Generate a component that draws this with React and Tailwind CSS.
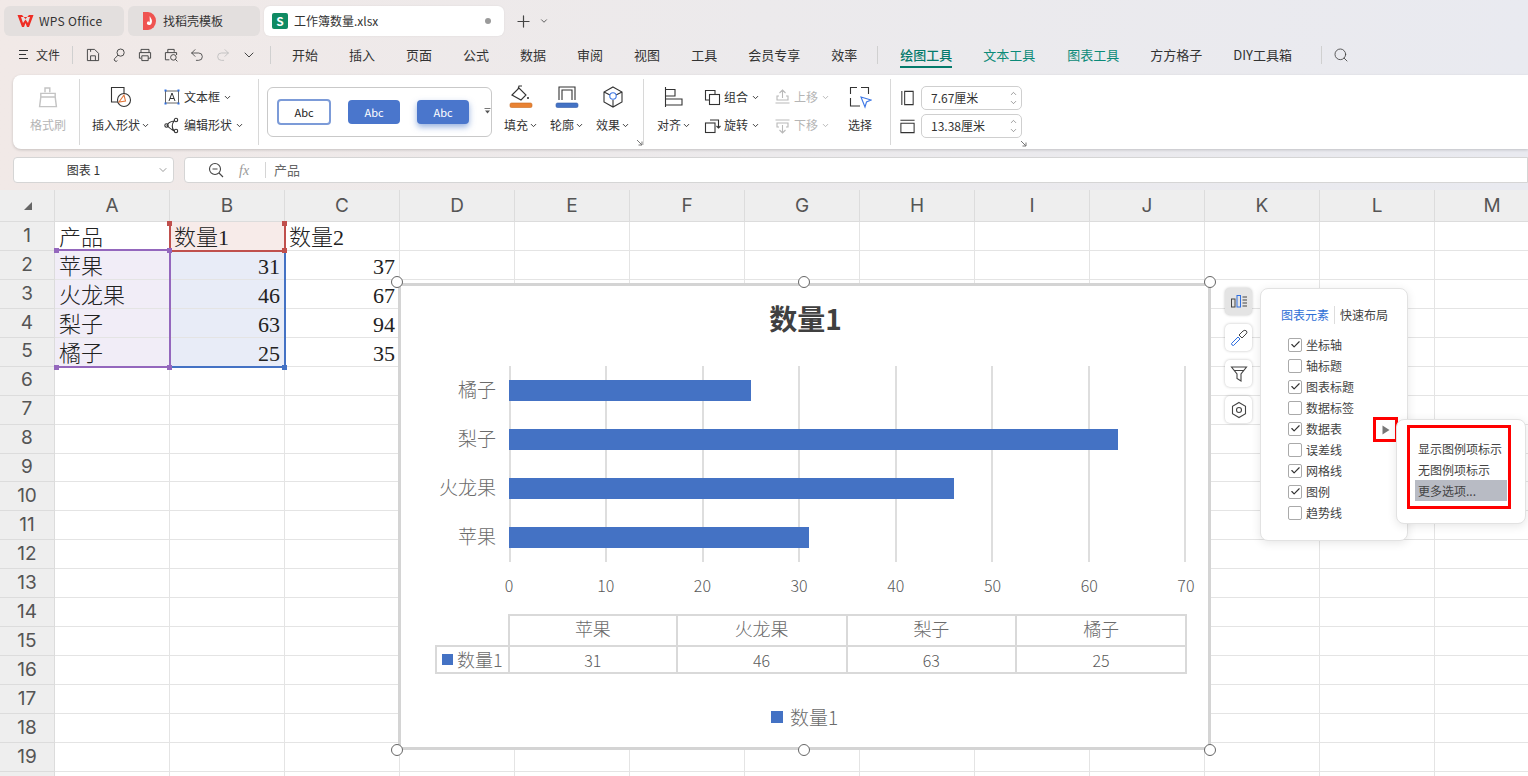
import { Plus, ChevronDown, ChevronUp, Check, Undo2, Redo2, Search } from 'lucide-react';

const ui = { fontFamily: '"Noto Sans CJK SC", "Noto Sans", sans-serif' };
const serif = { fontFamily: '"Liberation Serif", "Noto Sans CJK SC", serif' };

const columns = ['A', 'B', 'C', 'D', 'E', 'F', 'G', 'H', 'I', 'J', 'K', 'L', 'M'];
const rows = Array.from({ length: 20 }, (_, i) => i + 1);
const cells = {
  A1: '产品', B1: '数量1', C1: '数量2',
  A2: '苹果', B2: '31', C2: '37',
  A3: '火龙果', B3: '46', C3: '67',
  A4: '梨子', B4: '63', C4: '94',
  A5: '橘子', B5: '25', C5: '35',
};
const bars = [
  { name: '橘子', value: 25 },
  { name: '梨子', value: 63 },
  { name: '火龙果', value: 46 },
  { name: '苹果', value: 31 },
];
const tableData = [
  { name: '苹果', value: 31 },
  { name: '火龙果', value: 46 },
  { name: '梨子', value: 63 },
  { name: '橘子', value: 25 },
];
const menus = ['开始', '插入', '页面', '公式', '数据', '审阅', '视图', '工具', '会员专享', '效率'];
const elements = [
  ['坐标轴', true], ['轴标题', false], ['图表标题', true], ['数据标签', false], ['数据表', true],
  ['误差线', false], ['网格线', true], ['图例', true], ['趋势线', false],
];

function Icon({ size = 20, className = '', children }) {
  return (
    <svg width={size} height={size} viewBox="0 0 20 20" fill="none" stroke="currentColor" strokeWidth="1.2" className={`shrink-0 ${className}`}>
      {children}
    </svg>
  );
}

function Tiny({ className = '' }) {
  return <ChevronDown size={9} strokeWidth={2.5} className={`shrink-0 ${className}`} />;
}

function RibbonBtn({ icon, label, chevron, muted, className = '' }) {
  return (
    <div className={`flex flex-col items-center shrink-0 self-start ${className}`}>
      <div className="h-[30px] flex items-center justify-center mt-[7px]">{icon}</div>
      <div className={`mt-[4px] h-[18px] flex items-center text-[12px] ${muted ? 'text-[#b5b5b5]' : 'text-[#333]'}`}>
        {label}
        {chevron && <Tiny className="ml-[1px]" />}
      </div>
    </div>
  );
}

function SmallBtn({ icon, label, muted }) {
  return (
    <div className={`flex items-center h-[24px] text-[12px] ${muted ? 'text-[#b5b5b5]' : 'text-[#333]'}`}>
      <span className="w-[20px] flex justify-center shrink-0">{icon}</span>
      <span className="ml-[2px]">{label}</span>
      <Tiny className="ml-[3px]" />
    </div>
  );
}

function Sep() {
  return <div className="w-px h-[66px] bg-[#d8d8d8] shrink-0" />;
}

function Tabs() {
  return (
    <div className="h-[36px] pt-[6px] pl-[4px] flex items-stretch gap-[4px] text-[12px] text-[#333]">
      <div className="w-[120px] rounded-[6px] bg-[#e3dfde] flex items-center pl-[13px]">
        <svg width="17" height="14" viewBox="0 0 17 14" className="shrink-0">
          <path d="M0.5 1 H5 L8.5 5 L12 1 H16.5 L12 13 H10 L8.5 9 L7 13 H5 Z M4 3 L6 9 L8.5 5.5 L11 9 L13 3" fill="#ee2d24" fillRule="evenodd" />
        </svg>
        <span className="ml-[5px] tracking-[0.3px]">WPS Office</span>
      </div>
      <div className="w-[132px] rounded-[6px] bg-[#e3dfde] flex items-center pl-[14px]">
        <svg width="15" height="18" viewBox="0 0 15 18" className="shrink-0">
          <path d="M1 0 H6 A8 9 0 0 1 6 18 H1 Z" fill="#ef5350" />
          <path d="M7.8 4 C9 7 11 8 9.5 11.5 C8.5 13.5 6 13.5 5 12 C4.5 10.5 5.5 9.5 6.5 9 C6.5 10 7 10.5 7.5 10 C8.3 8 7.2 6 7.8 4 Z" fill="#fff" />
        </svg>
        <span className="ml-[6px]">找稻壳模板</span>
      </div>
      <div className="w-[240px] rounded-[6px] bg-white flex items-center pl-[8px] pr-[13px] shadow-[0_0_2px_rgba(0,0,0,0.08)]">
        <span className="w-[16px] h-[16px] rounded-[2px] bg-[#0f8a63] text-white text-[12px] font-bold flex items-center justify-center shrink-0">S</span>
        <span className="ml-[6px] flex-1">工作簿数量.xlsx</span>
        <span className="w-[6px] h-[6px] rounded-full bg-[#9a9a9a]" />
      </div>
      <div className="ml-[6px] flex items-center text-[#444]">
        <Plus size={19} strokeWidth={1.5} />
        <ChevronDown size={10} strokeWidth={2} className="ml-[6px]" />
      </div>
    </div>
  );
}

function MenuBar() {
  return (
    <div className="h-[39px] pb-[2px] flex items-center text-[13px] text-[#333]">
      <div className="ml-[19px] w-[9px] flex flex-col gap-[3px] shrink-0">
        <span className="h-px bg-[#333]" />
        <span className="h-px bg-[#333] w-[7px]" />
        <span className="h-px bg-[#333]" />
      </div>
      <span className="ml-[8px] text-[12px]">文件</span>
      <div className="ml-[12px] w-px h-[18px] bg-[#d0d0d0]" />
      <div className="ml-[12px] flex items-center gap-[10px] text-[#444] w-[172px]">
        <Icon size={16}>
          <path d="M3 3 H12 L17 8 V17 H3 Z M7 17 V11 H13 V17 M7 3 V6" />
        </Icon>
        <Icon size={16}>
          <circle cx="12" cy="7" r="4.5" />
          <path d="M9 10 L4.5 14.5 A1.8 1.8 0 0 0 8 17" />
        </Icon>
        <Icon size={16}>
          <path d="M5 7 V3 H15 V7 M3 14 V7 H17 V14 H14 M5 14 H3 M6 11 H14 V17 H6 Z" />
        </Icon>
        <Icon size={16}>
          <path d="M6 7 V3 H14 V6 M8 16 H3 V7 H17 V10" />
          <circle cx="13" cy="13" r="3.5" />
          <path d="M15.5 15.5 L18 18" />
        </Icon>
        <Undo2 size={16} strokeWidth={1.3} className="shrink-0" />
        <Redo2 size={16} strokeWidth={1.3} className="shrink-0 text-[#bdbdbd]" />
        <ChevronDown size={16} strokeWidth={1.5} className="shrink-0" />
      </div>
      <div className="w-px h-[18px] bg-[#d0d0d0] ml-[13px]" />
      <div className="ml-[21px] flex gap-[31px]">
        {menus.map((m) => <span key={m}>{m}</span>)}
      </div>
      <div className="ml-[20px] w-px h-[18px] bg-[#d0d0d0]" />
      <div className="ml-[22px] relative text-[#047a6b] font-medium">
        绘图工具
        <span className="absolute left-0 right-0 -bottom-[4px] h-[2px] bg-[#047a6b]" />
      </div>
      <span className="ml-[31px] text-[#0b8a78]">文本工具</span>
      <span className="ml-[32px] text-[#0b8a78]">图表工具</span>
      <span className="ml-[31px]">方方格子</span>
      <span className="ml-[31px]">DIY工具箱</span>
      <div className="ml-[29px] w-px h-[18px] bg-[#d0d0d0]" />
      <Search size={16} strokeWidth={1.3} className="ml-[11px] text-[#444]" />
    </div>
  );
}

function StylePreset({ variant, children }) {
  const styles = {
    outline: 'w-[54px] h-[26px] border-2 border-[#7c9bd8] bg-white text-[#222]',
    fill: 'w-[52px] h-[24px] bg-[#4a76cc] text-white',
    glow: 'w-[52px] h-[24px] bg-[#4a76cc] text-white shadow-[0_3px_6px_rgba(68,114,196,0.55)]',
  };
  return (
    <div className={`rounded-[4px] flex items-center justify-center text-[11px] shrink-0 ${styles[variant]}`}>{children}</div>
  );
}

function Ribbon() {
  return (
    <div className="ml-[13px] h-[74px] rounded-l-[8px] bg-white shadow-[0_1px_3px_rgba(0,0,0,0.18)] flex items-center relative">
      <RibbonBtn
        className="w-[66px] pl-[4px]"
        muted
        label="格式刷"
        icon={
          <Icon size={24} className="text-[#c4c4c4]">
            <path d="M7.5 6 V2.5 H11.5 V6 M4 7 H16 V10 L17 18 H3 L4 10 Z M4 10 H16" />
          </Icon>
        }
      />
      <Sep />
      <RibbonBtn
        className="w-[84px] ml-[-1px]"
        chevron
        label="插入形状"
        icon={
          <svg width="24" height="24" viewBox="0 0 24 24" fill="none" stroke="#333" strokeWidth="1.1">
            <path d="M9 17 H2.5 V2.5 H15 V9" />
            <circle cx="15" cy="15" r="6.5" />
            <path d="M10 17 L15 10 L16.5 16 Z" stroke="#e1763a" fill="#fff" />
          </svg>
        }
      />
      <div className="flex flex-col gap-[4px] w-[96px] ml-[-1px] shrink-0 self-start mt-[10px]">
        <SmallBtn
          label="文本框"
          icon={
            <svg width="16" height="16" viewBox="0 0 16 16" fill="none" stroke="#333" strokeWidth="1">
              <path d="M1.5 2 V14 M14.5 2 V14 M2 2 H14 M2 14 H14" stroke="#666" />
              <path d="M5 12 L8 4 L11 12 M6 9.5 H10" />
              <rect x="0.5" y="0.5" width="2" height="2" fill="#2f6fe0" stroke="none" />
              <rect x="13.5" y="0.5" width="2" height="2" fill="#2f6fe0" stroke="none" />
              <rect x="0.5" y="13.5" width="2" height="2" fill="#2f6fe0" stroke="none" />
              <rect x="13.5" y="13.5" width="2" height="2" fill="#2f6fe0" stroke="none" />
            </svg>
          }
        />
        <SmallBtn
          label="编辑形状"
          icon={
            <svg width="17" height="17" viewBox="0 0 17 17" fill="none" stroke="#333" strokeWidth="1.1">
              <path d="M10 4 Q4 5 3 8.5 Q5 11 10 14 M10 4 Q6.5 9 10 14" />
              <circle cx="12" cy="3" r="1.7" />
              <circle cx="2.5" cy="8.5" r="1.7" />
              <circle cx="12" cy="14" r="1.7" />
            </svg>
          }
        />
      </div>
      <Sep />
      <div className="ml-[8px] w-[225px] h-[50px] rounded-[6px] border border-[#c9c9c9] flex items-center pl-[9px] gap-[17px] relative shrink-0">
        <StylePreset variant="outline">Abc</StylePreset>
        <StylePreset variant="fill">Abc</StylePreset>
        <StylePreset variant="glow">Abc</StylePreset>
        <svg width="7" height="7" viewBox="0 0 7 7" className="ml-[-2px] mt-[-2px]">
          <path d="M0.5 0.5 H6.5" stroke="#555" strokeWidth="0.8" />
          <path d="M1 2.5 H6 L3.5 5.5 Z" fill="#555" />
        </svg>
      </div>
      <RibbonBtn
        className="w-[46px] ml-[6px]"
        chevron
        label="填充"
        icon={
          <svg width="26" height="26" viewBox="0 0 26 26" fill="none" stroke="#333" strokeWidth="1.1">
            <path d="M4 11 L11 4 L18 11 L13 16 Z M10 5 L11 2 L14 2" />
            <path d="M20 13 V15" strokeWidth="1.6" />
            <rect x="2" y="19" width="22" height="4.5" rx="1.5" fill="#e98232" stroke="#c66a20" strokeWidth="0.6" />
          </svg>
        }
      />
      <RibbonBtn
        className="w-[46px]"
        chevron
        label="轮廓"
        icon={
          <svg width="26" height="26" viewBox="0 0 26 26" fill="none" stroke="#333" strokeWidth="1.1">
            <path d="M5 16 V3 H21 V16 M8 16 V6 H18 V16" />
            <rect x="2" y="19" width="22" height="4.5" rx="1.5" fill="#4472c4" stroke="#305ba8" strokeWidth="0.6" />
          </svg>
        }
      />
      <RibbonBtn
        className="w-[46px]"
        chevron
        label="效果"
        icon={
          <svg width="24" height="24" viewBox="0 0 24 24" fill="none" stroke="#333" strokeWidth="1.1">
            <path d="M12 2 L21 7 V17 L12 22 L3 17 V7 Z M3 7 L9 10 M21 7 L15 10 M12 15 V22" />
            <circle cx="12" cy="11" r="3.2" stroke="#3e78e6" />
          </svg>
        }
      />
      <svg width="7" height="7" viewBox="0 0 7 7" className="self-end mb-[3px] shrink-0" stroke="#777" fill="none">
        <path d="M1 1 L6 6 M6 2.5 V6 H2.5" />
      </svg>
      <Sep />
      <RibbonBtn
        className="w-[48px] ml-[6px]"
        chevron
        label="对齐"
        icon={
          <svg width="20" height="22" viewBox="0 0 20 22" fill="none" stroke="#333" strokeWidth="1.1">
            <path d="M1.5 1 V21 M1.5 3.5 H11 V10 H1.5 M1.5 13 H18 V19 H1.5" />
          </svg>
        }
      />
      <div className="flex flex-col gap-[4px] w-[70px] shrink-0 ml-[4px] self-start mt-[10px]">
        <SmallBtn
          label="组合"
          icon={
            <svg width="17" height="17" viewBox="0 0 17 17" fill="none" stroke="#333" strokeWidth="1.1">
              <path d="M5 11 H1.5 V1.5 H11 V5" />
              <rect x="5.5" y="5.5" width="10" height="10" />
            </svg>
          }
        />
        <SmallBtn
          label="旋转"
          icon={
            <svg width="17" height="17" viewBox="0 0 17 17" fill="none" stroke="#333" strokeWidth="1.1">
              <rect x="1.5" y="6" width="9.5" height="9.5" />
              <path d="M6 3 H14.5 V11 M12.5 9 L14.5 11 L16.5 9" />
            </svg>
          }
        />
      </div>
      <div className="flex flex-col gap-[4px] w-[70px] shrink-0 self-start mt-[10px]">
        <SmallBtn
          muted
          label="上移"
          icon={
            <svg width="17" height="17" viewBox="0 0 17 17" fill="none" stroke="#b9b9b9" strokeWidth="1.1">
              <path d="M8.5 1 V9 M5.5 4 L8.5 1 L11.5 4 M5 7 H3 V11 H14 V7 H12 M1.5 14 H15.5" />
            </svg>
          }
        />
        <SmallBtn
          muted
          label="下移"
          icon={
            <svg width="17" height="17" viewBox="0 0 17 17" fill="none" stroke="#b9b9b9" strokeWidth="1.1">
              <path d="M8.5 16 V8 M5.5 13 L8.5 16 L11.5 13 M5 10 H3 V6 H14 V10 H12 M1.5 3 H15.5" />
            </svg>
          }
        />
      </div>
      <RibbonBtn
        className="w-[36px]"
        label="选择"
        icon={
          <svg width="24" height="24" viewBox="0 0 24 24" fill="none" stroke="#333" strokeWidth="1.1">
            <path d="M9 2.5 H2.5 V9 M13 2.5 H20.5 V9 M2.5 13 V21 H12" />
            <path d="M13 12 L23 15 L18.5 17 L17 22 Z" stroke="#3e78e6" />
          </svg>
        }
      />
      <div className="ml-[12px]"><Sep /></div>
      <div className="ml-[8px] flex flex-col gap-[4px] shrink-0 relative">
        {[
          ['7.67厘米', 'M3 1.5 V16.5 M6 2 H15 V16 H6 Z'],
          ['13.38厘米', 'M1.5 3 H16.5 M2 6 H16 V16 H2 Z'],
        ].map(([v, d]) => (
          <div key={v} className="flex items-center">
            <svg width="17" height="18" viewBox="0 0 18 18" fill="none" stroke="#333" strokeWidth="1.1"><path d={d} /></svg>
            <div className="ml-[5px] w-[101px] h-[24px] rounded-[5px] border border-[#cfcfcf] flex items-center pl-[9px] pr-[3px] text-[12px] text-[#333]">
              <span className="flex-1">{v}</span>
              <div className="flex flex-col text-[#555]">
                <ChevronUp size={9} strokeWidth={1.5} />
                <ChevronDown size={9} strokeWidth={1.5} />
              </div>
            </div>
          </div>
        ))}
        <svg width="7" height="7" viewBox="0 0 7 7" className="absolute -right-[5px] -bottom-[9px]" stroke="#777" fill="none">
          <path d="M1 1 L6 6 M6 2.5 V6 H2.5" />
        </svg>
      </div>
    </div>
  );
}

function FormulaBar() {
  return (
    <div className="mt-[8px] ml-[13px] h-[26px] flex gap-[10px] text-[12px] text-[#333]">
      <div className="w-[161px] rounded-[4px] bg-white border border-[#d5d5d5] flex items-center">
        <span className="flex-1 text-center pr-[4px]">图表 1</span>
        <ChevronDown size={12} strokeWidth={1.3} className="mr-[4px] text-[#666]" />
      </div>
      <div className="flex-1 rounded-l-[4px] bg-white border border-[#d5d5d5] flex items-center">
        <svg width="16" height="16" viewBox="0 0 16 16" fill="none" stroke="#444" strokeWidth="1.1" className="ml-[23px]">
          <circle cx="7" cy="7" r="5.5" />
          <path d="M11 11 L15 15 M4.5 7 H9.5" />
        </svg>
        <span style={serif} className="ml-[15px] italic text-[#999] text-[14px]">fx</span>
        <div className="ml-[16px] w-px h-[16px] bg-[#d5d5d5]" />
        <span className="ml-[8px] text-[#666] text-[13px]">产品</span>
      </div>
    </div>
  );
}

function cellTint(key) {
  if (key === 'B1') return 'bg-[#f7ebe9]';
  if (key[0] === 'A' && key !== 'A1' && Number(key.slice(1)) <= 5) return 'bg-[#f1edf7]';
  if (key[0] === 'B' && Number(key.slice(1)) <= 5) return 'bg-[#e8ecf7]';
  return 'bg-white';
}

function Sheet() {
  return (
    <div className="grid grid-cols-[55px_repeat(13,115px)] grid-rows-[32px_repeat(20,28.95px)] bg-white text-[#222]">
      <div className="bg-[#eeeeee] border-r border-b border-[#dcdcdc] flex items-center justify-center pl-[2px]">
        <svg width="10" height="10" viewBox="0 0 10 10"><path d="M9 1 V9 H1 Z" fill="#666" /></svg>
      </div>
      {columns.map((c) => (
        <div key={c} style={{ fontFamily: 'Inter, sans-serif' }} className="bg-[#eeeeee] border-r border-b border-[#dcdcdc] flex items-center justify-center pt-[1px] text-[19px] text-[#555]">
          {c}
        </div>
      ))}
      {rows.map((r) => [
        <div key={`h${r}`} style={{ fontFamily: 'Inter, sans-serif' }} className="bg-[#eeeeee] border-r border-b border-[#dcdcdc] flex items-center justify-center text-[19px] text-[#555]">
          {r}
        </div>,
        ...columns.map((c) => {
          const key = `${c}${r}`;
          const value = cells[key];
          const numeric = value && /^\d+$/.test(value);
          return (
            <div
              key={key}
              style={serif}
              className={`border-r border-b border-[#e4e4e4] flex items-end px-[4px] text-[22px] leading-[24px] font-light overflow-hidden whitespace-nowrap ${numeric ? 'justify-end' : ''} ${cellTint(key)}`}
            >
              {value}
            </div>
          );
        }),
      ])}
    </div>
  );
}

function Handle({ className, color }) {
  return <span className={`absolute w-[5px] h-[5px] ${className}`} style={{ background: color }} />;
}

function Knob({ className }) {
  return <span className={`absolute w-[12px] h-[12px] rounded-full bg-white border border-[#666] ${className}`} />;
}

function Chart() {
  return (
    <div className="absolute left-[398px] top-[283px] w-[813px] h-[467px] bg-white border-[3px] border-[#d4d4d4] text-[#6b6b6b] font-light" style={serif}>
      <Knob className="-left-[10px] -top-[10px]" />
      <Knob className="left-[397px] -top-[10px]" />
      <Knob className="-right-[8px] -top-[10px]" />
      <Knob className="-left-[10px] -bottom-[9px]" />
      <Knob className="left-[397px] -bottom-[9px]" />
      <Knob className="-right-[8px] -bottom-[9px]" />

      <div style={ui} className="pt-[12px] h-[80px] text-center text-[28px] leading-[40px] font-bold text-[#404040] pl-[2px]">数量1</div>

      <div className="flex">
        <div className="w-[95px] shrink-0 flex flex-col">
          {bars.map((b) => (
            <div key={b.name} className="h-[49px] pt-[2px] flex items-center justify-end text-[19px] whitespace-nowrap">{b.name}</div>
          ))}
        </div>
        <div className="ml-[13px] w-[677px] relative">
          <div className="absolute inset-0 flex justify-between">
            {[0, 1, 2, 3, 4, 5, 6, 7].map((i) => <span key={i} className="w-[2px] bg-[#dedede]" />)}
          </div>
          {bars.map((b) => (
            <div key={b.name} className="h-[49px] flex items-center relative">
              <div className="h-[21px] bg-[#4472c4]" style={{ width: `${(b.value / 70) * 677}px` }} />
            </div>
          ))}
        </div>
      </div>

      <div className="ml-[108px] w-[677px] flex justify-between mt-[13px] h-[20px] text-[16px] leading-[20px] text-[#595959]" style={ui}>
        {[0, 10, 20, 30, 40, 50, 60, 70].map((n) => (
          <span key={n} className="w-0 flex justify-center">{n}</span>
        ))}
      </div>

      <div className="ml-[34px] mt-[19px] w-[752px] grid grid-cols-[73px_repeat(4,1fr)] grid-rows-[31px_29px] text-[18px]">
        <div />
        {tableData.map((d, i) => (
          <div key={d.name} className={`border-t-2 border-r-2 border-[#d9d9d9] flex items-center justify-center ${i === 0 ? 'border-l-2' : ''}`}>{d.name}</div>
        ))}
        <div className="border-2 border-r-0 border-[#d9d9d9] flex items-center pl-[5px] whitespace-nowrap text-[18px]">
          <span className="w-[11px] h-[11px] bg-[#4472c4] mr-[4px] shrink-0" />
          <span style={ui}>数量1</span>
        </div>
        {tableData.map((d, i) => (
          <div key={d.name} className={`border-t-2 border-b-2 border-r-2 border-[#d9d9d9] flex items-center justify-center text-[#595959] ${i === 0 ? 'border-l-2' : ''}`} style={ui}>
            <span className="text-[16px]">{d.value}</span>
          </div>
        ))}
      </div>

      <div className="mt-[29px] flex items-center justify-center text-[19px]">
        <span className="w-[12px] h-[12px] bg-[#4472c4] mr-[7px]" />
        <span style={ui}>数量1</span>
      </div>
    </div>
  );
}

function SideBtn({ active, children }) {
  return (
    <div className={`w-[27px] h-[27px] rounded-[5px] flex items-center justify-center shadow-[0_0_3px_rgba(0,0,0,0.25)] ${active ? 'bg-[#e4e4e4]' : 'bg-white'}`}>
      {children}
    </div>
  );
}

function ChartTools() {
  return (
    <div style={ui} className="absolute left-[1225px] top-[288px] flex items-start gap-[8px] text-[12px] text-[#444]">
      <div className="flex flex-col gap-[9px]">
        <SideBtn active>
          <svg width="20" height="20" viewBox="0 0 20 20" fill="none" stroke="#444" strokeWidth="1">
            <rect x="2.5" y="7" width="3.5" height="8" />
            <rect x="8" y="3.5" width="3.5" height="11.5" stroke="#2f6fe0" />
            <path d="M13.5 5 H18 M13.5 8 H18 M13.5 11 H18 M13.5 14 H18" />
          </svg>
        </SideBtn>
        <SideBtn>
          <svg width="20" height="20" viewBox="0 0 20 20" fill="none" stroke="#444" strokeWidth="1">
            <path d="M10 7 L14 3 Q16 1.5 17.5 3 Q18.5 5 17 6 L13 10 Z" />
            <path d="M3 17 L2.5 15.5 L9 9 L11 11 L4.5 17.5 Z" stroke="#2f6fe0" />
          </svg>
        </SideBtn>
        <SideBtn>
          <svg width="20" height="20" viewBox="0 0 20 20" fill="none" stroke="#444" strokeWidth="1.1">
            <path d="M2.5 3 H17.5 L12 10 V17 L8 14.5 V10 Z M5.5 6.5 H14.5" />
          </svg>
        </SideBtn>
        <SideBtn>
          <svg width="20" height="20" viewBox="0 0 20 20" fill="none" stroke="#444" strokeWidth="1.1">
            <path d="M10 2.5 L16.5 6.2 V13.8 L10 17.5 L3.5 13.8 V6.2 Z" />
            <circle cx="10" cy="10" r="2.5" />
          </svg>
        </SideBtn>
      </div>

      <div className="w-[148px] h-[253px] rounded-[8px] bg-white border border-[#e2e2e2] shadow-[0_2px_10px_rgba(0,0,0,0.1)] relative pl-[20px] pt-[17px]">
        <div className="flex items-center h-[18px]">
          <span className="text-[#2f6fd6]">图表元素</span>
          <span className="mx-[5px] w-px h-[18px] bg-[#ddd]" />
          <span>快速布局</span>
        </div>
        <div className="mt-[10px] ml-[7px] flex flex-col">
          {elements.map(([name, on]) => (
            <div key={name} className="h-[21px] flex items-center">
              <span className="w-[14px] h-[14px] rounded-[2px] border border-[#aaa] bg-white flex items-center justify-center text-[#333]">
                {on && <Check size={11} strokeWidth={2.5} />}
              </span>
              <span className="ml-[4px]">{name}</span>
            </div>
          ))}
        </div>
        <div className="absolute left-[112px] top-[128px] w-[25px] h-[25px] border-[3px] border-[#ff0000] flex items-center justify-center">
          <svg width="8" height="10" viewBox="0 0 8 10"><path d="M0.5 0.5 L7.5 5 L0.5 9.5 Z" fill="#777" /></svg>
        </div>
      </div>

      <div className="absolute left-[171px] top-[131px] w-[130px] h-[105px] rounded-[8px] bg-white border border-[#e2e2e2] shadow-[0_2px_10px_rgba(0,0,0,0.1)] pl-[10px] pt-[5px]">
        <div className="w-[104px] h-[84px] border-[3px] border-[#ff0000] pt-[10px] pl-[5px]">
          <div className="h-[21px] flex items-center pl-[3px] whitespace-nowrap">显示图例项标示</div>
          <div className="h-[21px] flex items-center pl-[3px] whitespace-nowrap">无图例项标示</div>
          <div className="h-[21px] w-[92px] flex items-center pl-[3px] bg-[#b8bbc4]">更多选项...</div>
        </div>
      </div>
    </div>
  );
}

export default function App() {
  return (
    <div style={ui} className="w-[1528px] h-[776px] overflow-hidden relative bg-gradient-to-r from-[#f1e9e7] via-[#eceaec] to-[#e9eaf0]">
      <Tabs />
      <MenuBar />
      <Ribbon />
      <FormulaBar />
      <div className="mt-[7px]">
        <Sheet />
      </div>

      {/* range highlights over the sheet */}
      <div className="absolute left-[56px] top-[249px] w-[115px] h-[119px] border-t-2 border-b-2 border-r-2 border-[#9467bd]" />
      <div className="absolute left-[171px] top-[251px] w-[115px] h-[117px] border-b-2 border-r-2 border-[#4472c4]" />
      <div className="absolute left-[169px] top-[222px] w-[117px] h-[30px] border-l-2 border-r-2 border-b-2 border-[#c0504d]" />
      <Handle className="left-[54px] top-[248px]" color="#9467bd" />
      <Handle className="left-[54px] top-[365px]" color="#9467bd" />
      <Handle className="left-[167px] top-[248px]" color="#9467bd" />
      <Handle className="left-[167px] top-[365px]" color="#9467bd" />
      <Handle className="left-[282px] top-[248px]" color="#c0504d" />
      <Handle className="left-[282px] top-[365px]" color="#4472c4" />
      <Handle className="left-[167px] top-[221px]" color="#c0504d" />
      <Handle className="left-[282px] top-[221px]" color="#c0504d" />

      <Chart />
      <ChartTools />
    </div>
  );
}
